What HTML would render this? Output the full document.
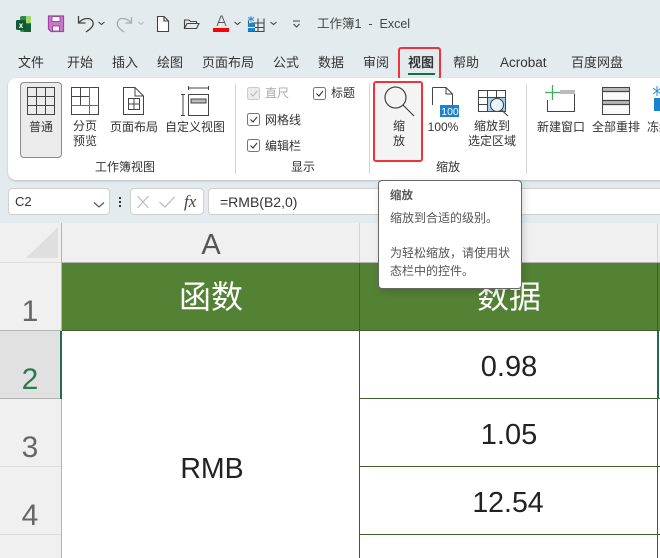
<!DOCTYPE html>
<html><head><meta charset="utf-8">
<style>
html,body{margin:0;padding:0}
body{width:660px;height:558px;overflow:hidden;position:relative;background:#e4ebef;font-family:"Liberation Sans","Noto Sans CJK SC",sans-serif;color:#333}
.a{position:absolute}
.t{position:absolute;white-space:nowrap;line-height:16px;font-size:12px;color:#333}
.c{transform:translateX(-50%);text-align:center}
.tab{font-size:13px;top:55px}
svg{position:absolute;overflow:visible}
</style></head><body>

<!-- QAT -->
<svg style="left:0;top:0" width="340" height="40" fill="none">
<rect x="20" y="16" width="11" height="16" rx="2" fill="#2c8a50"/><rect x="26" y="16" width="5" height="7" fill="#a5d46a"/><rect x="24" y="24" width="7" height="8" fill="#14603a"/>
<rect x="16" y="20" width="10" height="10" rx="1.5" fill="#0f5a33"/>
<text x="21" y="28" font-size="8" font-weight="700" fill="#fff" text-anchor="middle" font-family="Liberation Sans">x</text>
<path d="M48.500 16H63.500V31.500H51L48.500 29Z" fill="#c878c8" stroke="#a044a8" stroke-width="1.200"/><rect x="52" y="16.500" width="8" height="5" fill="#fff" stroke="#a044a8"/><rect x="52.500" y="26" width="7" height="5" fill="#fff" stroke="#a044a8"/>
<path d="M78.500 16V23H85.500M79 23C82 18 90 17 92.500 21C94.500 25 92 28 86 32" stroke="#444" stroke-width="1.300"/>
<path d="M98.500 22L101.500 24.500L104.500 22" stroke="#444" stroke-width="1.100"/>
<path d="M131.500 17V23H125.500M131 23C128 18 120 17 118 21C116 25 118 28 124 32" stroke="#aaa" stroke-width="1.300"/>
<path d="M138.500 22L141 24.500L143.500 22" stroke="#bbb" stroke-width="1.100"/>
<path d="M157.500 16.500H164L168.500 21V31.500H157.500ZM164 16.500V21H168.500" stroke="#444" stroke-width="1.100" fill="#fff"/>
<path d="M184.500 28.500V20H189L190.500 21.500H196.500V23.500M184.500 28.500L187 23.500H199L196.500 28.500Z" stroke="#444" stroke-width="1.100"/>
<path d="M217 26L221 16H222L226 26M218.500 22.500H224.500" stroke="#555" stroke-width="1"/>
<rect x="213" y="28" width="16" height="4" fill="#f00"/>
<path d="M234.500 22L237.500 24.500L240.500 22" stroke="#444" stroke-width="1.100"/>
<path d="M251.500 23H264M258 18.500V31.500M248.500 27.500H264M264 18.500V31.500H248.500V21" stroke="#444" stroke-width="1.100"/>
<rect x="248" y="23" width="7" height="8.500" fill="#1b82d0"/><rect x="248" y="27" width="7" height="1" fill="#fff"/><rect x="258.500" y="18.500" width="5" height="4" fill="#d8e4ee"/>
<path d="M251 16V22M248 17.500L254 20.500M254 17.500L248 20.500" stroke="#2a8fdc" stroke-width="1"/>
<path d="M270.500 22L273.500 24.500L276.500 22" stroke="#444" stroke-width="1.100"/>
<path d="M293 21H300M293.500 24L296.500 27L299.500 24" stroke="#444" stroke-width="1.100"/>
</svg>
<div class="t" style="left:317px;top:16px;font-size:12.500px;color:#444">工作簿1&nbsp; -&nbsp; Excel</div>

<!-- tabs -->
<div class="t tab" style="left:18px">文件</div>
<div class="t tab" style="left:67px">开始</div>
<div class="t tab" style="left:112px">插入</div>
<div class="t tab" style="left:157px">绘图</div>
<div class="t tab" style="left:202px">页面布局</div>
<div class="t tab" style="left:273px">公式</div>
<div class="t tab" style="left:318px">数据</div>
<div class="t tab" style="left:363px">审阅</div>
<div class="t tab" style="left:408px;font-weight:700">视图</div>
<div class="t tab" style="left:453px">帮助</div>
<div class="t tab" style="left:500px;font-size:13.500px">Acrobat</div>
<div class="t tab" style="left:571px">百度网盘</div>
<div class="a" style="left:408px;top:73px;width:27px;height:2px;background:#1e6b41"></div>
<div class="a" style="left:398px;top:47px;width:43px;height:33px;border:2px solid #f0323a;border-radius:3px;box-sizing:border-box"></div>

<!-- ribbon -->
<div class="a" style="left:8px;top:78px;width:670px;height:102px;background:#fff;border-radius:8px;box-shadow:0 1px 2px #bbb"></div>
<div class="a" style="left:20px;top:82px;width:42px;height:76px;background:#ebebeb;border:1px solid #8a8a8a;border-radius:4px;box-sizing:border-box"></div>
<div class="a" style="left:235px;top:84px;width:1px;height:90px;background:#d4d4d4"></div>
<div class="a" style="left:369px;top:84px;width:1px;height:90px;background:#d4d4d4"></div>
<div class="a" style="left:526px;top:84px;width:1px;height:90px;background:#d4d4d4"></div>
<div class="a" style="left:375px;top:83px;width:46px;height:77px;background:#f4f4f4;border-radius:3px"></div>
<div class="a" style="left:373px;top:81px;width:50px;height:81px;border:2px solid #f0323a;border-radius:3px;box-sizing:border-box"></div>

<svg style="left:0;top:78px" width="660" height="60" fill="none" stroke="#444" stroke-width="1">
<!-- normal -->
<path d="M27.500 9.500H54.500V36.500H27.500ZM36.500 9.500V36.500M45.500 9.500V36.500M27.500 18.500H54.500M27.500 27.500H54.500"/>
<!-- page break -->
<path d="M71.500 9.500H98.500V36.500H71.500ZM80.500 9.500V27M71.500 18.500H89"/>
<path d="M89.500 9.500V36.500M71.500 27.500H98.500" stroke="#1b82d0"/>
<!-- page layout -->
<path d="M123.500 9.500H135L143.500 18V36.500H123.500ZM135 9.500V18H143.500"/>
<path d="M128.500 20.500H139.500V31.500H128.500ZM128.500 26H139.500M134 20.500V31.500"/>
<!-- custom -->
<path d="M188.500 8V12M188.500 10H208.500M208.500 8V12"/>
<path d="M181 16.500H185M183 16.500V37.500M181 37.500H185"/>
<path d="M188.500 16.500H208.500V37.500H188.500Z"/>
<rect x="191" y="21" width="15" height="4" fill="#bbb"/>
<!-- magnifier -->
<circle cx="395.500" cy="19.500" r="10.500" stroke-width="1.200"/>
<path d="M403 27L414 38" stroke-width="1.200"/>
<!-- 100% -->
<path d="M432.500 9.500H446L452.500 16V27M432.500 9.500V27M446 9.500V16H452.500"/>
<rect x="440" y="27" width="19" height="12" fill="#1b82d0" stroke="none"/>
<text x="450" y="37" font-size="10.500" fill="#fff" stroke="none" text-anchor="middle" font-family="Liberation Sans">100</text>
<!-- zoom selection -->
<path d="M478.500 12.500H505.500V33.500H478.500ZM487.500 12.500V33.500M496.500 12.500V19M478.500 19.500H505.500M478.500 26.500H487"/>
<rect x="488" y="20" width="17" height="13" fill="#a9d0ef" stroke="none"/>
<circle cx="497" cy="27" r="6.500" fill="#e8f3fb" stroke-width="1.100"/><path d="M501.500 32L508 38" stroke-width="1.100"/>
<!-- new window -->
<path d="M547.500 22V33.500H574.500V12.500"/>
<rect x="560" y="12" width="15" height="4" fill="#bbb" stroke="none"/>
<path d="M552.500 7V22M545 14.500H560" stroke="#3fae5a" stroke-width="1.300"/>
<!-- arrange -->
<path d="M602.500 9.500H629.500V36.500H602.500Z" fill="#fafafa"/>
<rect x="603" y="10" width="26" height="3.500" fill="#bbb" stroke="none"/><rect x="603" y="23" width="26" height="3.500" fill="#bbb" stroke="none"/>
<path d="M602.500 13.500H629.500M602.500 22.500H629.500M602.500 26.500H629.500" stroke-width="1.200"/>
<!-- freeze -->
<rect x="654" y="20" width="8" height="13" fill="#1b82d0" stroke="none"/>
<path d="M657 8V18M653 10L661 16M661 10L653 16" stroke="#2a8fdc"/>
</svg>

<!-- ribbon labels -->
<div class="t c" style="left:41px;top:119px">普通</div>
<div class="t c" style="left:85px;top:119px;line-height:15px">分页<br>预览</div>
<div class="t c" style="left:134px;top:119px">页面布局</div>
<div class="t c" style="left:195px;top:119px">自定义视图</div>
<div class="t c" style="left:125px;top:159px">工作簿视图</div>
<div class="t" style="left:265px;top:85px;color:#aaa">直尺</div>
<div class="t" style="left:331px;top:85px">标题</div>
<div class="t" style="left:265px;top:112px">网格线</div>
<div class="t" style="left:265px;top:138px">编辑栏</div>
<div class="t c" style="left:303px;top:159px">显示</div>
<svg style="left:0;top:0" width="660" height="160" fill="none">
<rect x="247.500" y="87.500" width="12" height="12" rx="2" fill="#ececec" stroke="#ccc"/><path d="M250.500 93.500L253 96L257 91" stroke="#bbb" stroke-width="1.100"/>
<rect x="313.500" y="87.500" width="12" height="12" rx="2" stroke="#777"/><path d="M316.500 93.500L319 96L323 91" stroke="#333" stroke-width="1.100"/>
<rect x="247.500" y="113.500" width="12" height="12" rx="2" stroke="#777"/><path d="M250.500 119.500L253 122L257 117" stroke="#333" stroke-width="1.100"/>
<rect x="247.500" y="139.500" width="12" height="12" rx="2" stroke="#777"/><path d="M250.500 145.500L253 148L257 143" stroke="#333" stroke-width="1.100"/>
</svg>
<div class="t c" style="left:399px;top:119px;line-height:15px">缩<br>放</div>
<div class="t c" style="left:443px;top:119px">100%</div>
<div class="t c" style="left:492px;top:119px;line-height:15px">缩放到<br>选定区域</div>
<div class="t c" style="left:448px;top:159px">缩放</div>
<div class="t c" style="left:561px;top:119px">新建窗口</div>
<div class="t c" style="left:616px;top:119px">全部重排</div>
<div class="t" style="left:647px;top:119px">冻结</div>

<!-- formula bar -->
<div class="a" style="left:8px;top:188px;width:102px;height:27px;background:#fff;border:1px solid #d0d0d0;border-radius:4px;box-sizing:border-box"></div>
<div class="t" style="left:15px;top:194px;font-size:13px">C2</div>
<div class="a" style="left:130px;top:188px;width:74px;height:27px;background:#fff;border:1px solid #d0d0d0;border-radius:4px;box-sizing:border-box"></div>
<div class="a" style="left:208px;top:188px;width:470px;height:27px;background:#fff;border:1px solid #d0d0d0;border-radius:4px;box-sizing:border-box"></div>
<svg style="left:0;top:175px" width="240" height="40" fill="none">
<path d="M94 27.500L99 32L104 27.500" stroke="#555" stroke-width="1.200"/>
<path d="M120 22V24M120 26V28M120 30V32" stroke="#333" stroke-width="2"/>
<path d="M137.500 21L148.500 33M148.500 21L137.500 33" stroke="#bbb" stroke-width="1.200"/>
<path d="M159.500 27L165 32L174.500 22" stroke="#bbb" stroke-width="1.200"/>
</svg>
<div class="t" style="left:184px;top:194px;font:italic 17px/16px 'Liberation Serif',serif;color:#444">fx</div>
<div class="t" style="left:220px;top:194px;font-size:14px">=RMB(B2,0)</div>

<!-- sheet -->
<div class="a" style="left:0;top:223px;width:660px;height:335px;background:#f0f0f0"></div>
<div class="a" style="left:0;top:262px;width:62px;height:1px;background:#ddd"></div>
<svg style="left:0;top:223px" width="62" height="40"><path d="M26 35L58 4V35Z" fill="#dfdfdf"/></svg>
<div class="a" style="left:61px;top:223px;width:1px;height:335px;background:#b4b4b4"></div>
<div class="a" style="left:359px;top:223px;width:1px;height:40px;background:#d4d4d4"></div>
<div class="a" style="left:657px;top:223px;width:1px;height:40px;background:#d4d4d4"></div>
<div class="a" style="left:62px;top:262px;width:598px;height:1px;background:#b4b4b4"></div>
<div class="t c" style="left:211px;top:230px;font-size:29px;line-height:30px;color:#555">A</div>

<!-- cells -->
<div class="a" style="left:62px;top:263px;width:598px;height:295px;background:#fff"></div>
<div class="a" style="left:62px;top:263px;width:598px;height:67px;background:#548235"></div>
<div class="a" style="left:62px;top:330px;width:598px;height:1px;background:#3e5f28"></div>
<div class="a" style="left:359px;top:263px;width:1px;height:295px;background:#3e5f28"></div>
<div class="a" style="left:657px;top:263px;width:1px;height:295px;background:#3e5f28"></div>
<div class="a" style="left:359px;top:398px;width:301px;height:1px;background:#3e5f28"></div>
<div class="a" style="left:359px;top:466px;width:301px;height:1px;background:#3e5f28"></div>
<div class="a" style="left:359px;top:534px;width:301px;height:1px;background:#3e5f28"></div>
<div class="t c" style="left:211px;top:278px;font-size:32px;line-height:38px;color:#fff">函数</div>
<div class="t c" style="left:509px;top:278px;font-size:32px;line-height:38px;color:#fff">数据</div>
<div class="t c" style="left:509px;top:350px;font-size:29px;line-height:34px;color:#222">0.98</div>
<div class="t c" style="left:509px;top:418px;font-size:29px;line-height:34px;color:#222">1.05</div>
<div class="t c" style="left:508px;top:486px;font-size:28.500px;line-height:34px;color:#222">12.54</div>
<div class="t c" style="left:212px;top:452px;font-size:28.500px;line-height:34px;color:#222">RMB</div>

<!-- row headers -->
<div class="a" style="left:0;top:331px;width:61px;height:67px;background:#e1e1e1"></div>
<div class="a" style="left:0;top:330px;width:61px;height:1px;background:#b4b4b4"></div>
<div class="a" style="left:0;top:398px;width:61px;height:1px;background:#b4b4b4"></div>
<div class="a" style="left:0;top:466px;width:61px;height:1px;background:#dcdcdc"></div>
<div class="a" style="left:0;top:534px;width:61px;height:1px;background:#dcdcdc"></div>
<div class="t c" style="left:30px;top:295px;font-size:30px;line-height:34px;color:#666">1</div>
<div class="t c" style="left:30px;top:363px;font-size:30px;line-height:34px;color:#2a7a50">2</div>
<div class="t c" style="left:30px;top:431px;font-size:30px;line-height:34px;color:#666">3</div>
<div class="t c" style="left:30px;top:499px;font-size:30px;line-height:34px;color:#666">4</div>
<!-- selection -->
<div class="a" style="left:60px;top:331px;width:2px;height:68px;background:#1e7145"></div>
<div class="a" style="left:657px;top:331px;width:2px;height:68px;background:#1e7145"></div>

<!-- tooltip -->
<div class="a" style="left:378px;top:180px;width:144px;height:109px;background:#fff;border:1px solid #666;border-radius:4px;box-sizing:border-box;box-shadow:2px 3px 8px rgba(0,0,0,.15)"></div>
<div class="t" style="left:390px;top:188px;font-size:11.500px;font-weight:700;color:#555">缩放</div>
<div class="t" style="left:390px;top:210px;color:#555">缩放到合适的级别。</div>
<div class="t" style="left:390px;top:245px;color:#555">为轻松缩放，请使用状</div>
<div class="t" style="left:390px;top:263px;color:#555">态栏中的控件。</div>
</body></html>
